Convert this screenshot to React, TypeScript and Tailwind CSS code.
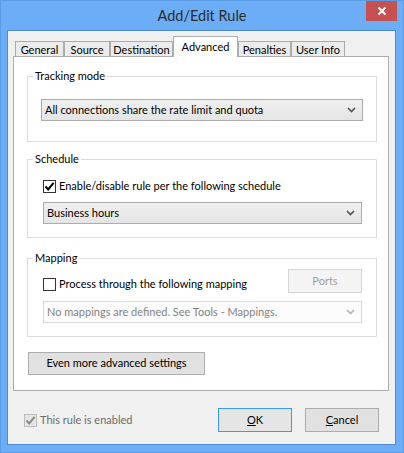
import React from "react";

function Chevron({ color = "#555" }: { color?: string }) {
  return (
    <svg width="9" height="6" viewBox="0 0 9 6">
      <path d="M1 1 L4.5 4.5 L8 1" fill="none" stroke={color} strokeWidth="1.7" />
    </svg>
  );
}

function Check({ color = "#000" }: { color?: string }) {
  return (
    <svg width="11" height="11" viewBox="0 0 11 11">
      <path d="M1.5 5.5 L4.2 8.4 L9.6 1.8" fill="none" stroke={color} strokeWidth="2" />
    </svg>
  );
}

function Tab({ label, w, selected }: { label: string; w: string; selected?: boolean }) {
  if (selected) {
    return (
      <div
        className={`${w} relative z-10 h-[21px] mb-[-1px] bg-white border border-b-0 border-[#acacac] flex justify-center pt-[2px] leading-[15px]`}
      >
        {label}
      </div>
    );
  }
  return (
    <div
      className={`${w} h-[15px] bg-[#ececec] border border-b-0 border-[#acacac] flex justify-center items-start leading-[15px]`}
    >
      {label}
    </div>
  );
}

function Combo({ text, disabled }: { text: string; disabled?: boolean }) {
  return (
    <div
      className={
        disabled
          ? "h-[22px] border border-[#d9d9d9] bg-[#fcfcfc] flex items-center justify-between pl-[3px] pr-[6px] text-[#838383]"
          : "h-[22px] border border-[#acacac] bg-gradient-to-b from-[#f0f0f0] to-[#e5e5e5] flex items-center justify-between pl-[3px] pr-[6px]"
      }
    >
      <span>{text}</span>
      <Chevron color={disabled ? "#b5b5b5" : "#555"} />
    </div>
  );
}

function Group({
  title,
  children,
  className,
  legendClass,
}: {
  title: string;
  children: React.ReactNode;
  className: string;
  legendClass: string;
}) {
  return (
    <fieldset className={`border border-[#dcdcdc] ${className}`}>
      <legend className={`${legendClass} px-[2px] leading-[16px]`}>{title}</legend>
      {children}
    </fieldset>
  );
}

export default function App() {
  return (
    <div className="w-[404px] h-[453px] bg-[#6badf6] border border-[#5a9be6] flex flex-col font-['Lato',sans-serif] text-[11px] text-black">
      <div className="h-[29px] grid grid-cols-[1fr_auto_1fr] shrink-0">
        <div />
        <div className="text-[14.5px] text-[#2b2b2b] pt-[5px] leading-[20px]">Add/Edit Rule</div>
        <div className="flex justify-end pr-[6px]">
          <div className="w-[31px] h-[20px] bg-[#c75050] flex items-center justify-center">
            <svg width="10" height="10" viewBox="0 0 10 10">
              <path d="M1.5 1.5 L8.5 8.5 M8.5 1.5 L1.5 8.5" stroke="#fff" strokeWidth="2" />
            </svg>
          </div>
        </div>
      </div>
      <div className="flex-1 ml-[6px] mr-[7px] mb-[7px] border border-[#4f8cd4] bg-[#f0f0f0] flex flex-col">
        <div className="flex items-end pt-[5px] pl-[7px]">
          <Tab label="General" w="w-[49px]" />
          <Tab label="Source" w="w-[46px]" />
          <Tab label="Destination" w="w-[63px]" />
          <Tab label="Advanced" w="w-[65px]" selected />
          <Tab label="Penalties" w="w-[53px]" />
          <Tab label="User Info" w="w-[54px]" />
        </div>
        <div className="ml-[5px] mr-[6px] h-[335px] border border-[#acacac] bg-white flex flex-col pl-[13px] pr-[11px]">
          <Group
            title="Tracking mode"
            legendClass="ml-[-8px]"
            className="mt-[11px] px-[13px] pt-[15px] pb-[20px]"
          >
            <Combo text="All connections share the rate limit and quota" />
          </Group>
          <Group
            title="Schedule"
            legendClass="ml-[-10px]"
            className="mt-[9px] pl-[15px] pr-[14px] pt-[11px] pb-[13px]"
          >
            <div className="flex items-center gap-[3px] h-[16px]">
              <div className="w-[13px] h-[13px] border border-[#333] bg-white flex items-center justify-center">
                <Check />
              </div>
              <span>Enable/disable rule per the following schedule</span>
            </div>
            <div className="mt-[8px]">
              <Combo text="Business hours" />
            </div>
          </Group>
          <Group
            title="Mapping"
            legendClass="ml-[-10px]"
            className="mt-[12px] pl-[15px] pr-[14px] pt-[3px] pb-[13px]"
          >
            <div className="flex items-end justify-between">
              <div className="flex items-center gap-[3px] h-[16px] mb-[1px]">
                <div className="w-[13px] h-[13px] border border-[#333] bg-white" />
                <span>Process through the following mapping</span>
              </div>
              <div className="w-[74px] h-[24px] border border-[#d5d5d5] bg-[#f4f4f4] text-[#a0a0a0] flex items-center justify-center">
                Ports
              </div>
            </div>
            <div className="mt-[8px]">
              <Combo text="No mappings are defined. See Tools - Mappings." disabled />
            </div>
          </Group>
          <div className="mt-[15px] ml-[1px] w-[177px] h-[23px] border border-[#adadad] bg-[#e1e1e1] flex items-center justify-center">
            Even more advanced settings
          </div>
        </div>
        <div className="flex items-center mt-[17px] pl-[16px] pr-[16px]">
          <div className="flex items-center gap-[3px] text-[#6d6d6d]">
            <div className="w-[13px] h-[13px] border border-[#bcbcbc] bg-[#e6e6e6] flex items-center justify-center">
              <Check color="#8a8a8a" />
            </div>
            <span>This rule is enabled</span>
          </div>
          <div className="flex-1" />
          <div className="w-[74px] h-[24px] border border-[#3399ff] bg-[#e5e5e5] flex items-center justify-center">
            <span>
              <span className="underline">O</span>K
            </span>
          </div>
          <div className="ml-[13px] w-[74px] h-[24px] border border-[#adadad] bg-[#e1e1e1] flex items-center justify-center">
            <span>
              <span className="underline">C</span>ancel
            </span>
          </div>
        </div>
      </div>
    </div>
  );
}
